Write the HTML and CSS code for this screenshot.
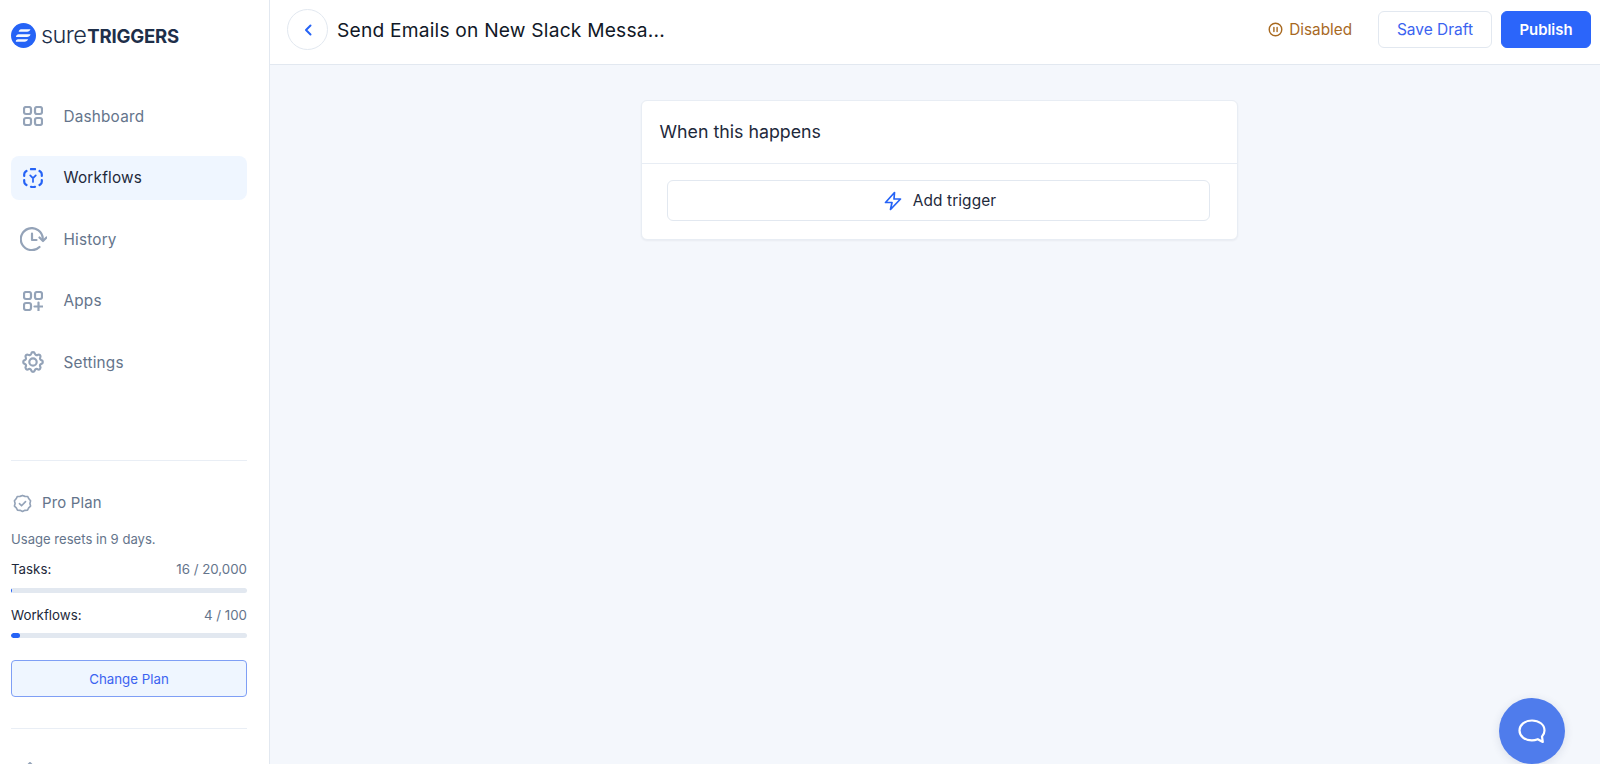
FILE: index.html
```html
<!DOCTYPE html>
<html lang="en">
<head>
<meta charset="utf-8">
<title>SureTriggers</title>
<link rel="stylesheet" href="styles.css">
</head>
<body>
<div class="app">
  <aside class="sidebar">
    <div class="logo">
      <svg class="logo-mark" viewBox="0 0 25 25"><circle cx="12.500" cy="12.500" r="12.500" fill="#2563f6"/><path d="M8.500 6.200c.4-.5.9-.7 1.500-.7h9.500c-.6 1.500-1.700 2.400-3.400 2.400H7.800c-.300 0 .2-1.200.7-1.700zM5.800 11.300c.5-.6 1.100-.8 1.800-.8h11.900c-.4 1.700-1.600 2.600-3.500 2.600H5c-.2 0 .3-1.200.8-1.800zM5.300 16.300c.5-.6 1.100-.8 1.800-.8h10c-.6 1.500-1.800 2.400-3.500 2.400H5c-.3 0-.2-1.100.3-1.600z" fill="#fff" opacity=".95" transform="translate(0 .8)"/></svg>
      <span class="logo-text"><span class="logo-light">sure</span><span class="logo-bold">TRIGGERS</span></span>
    </div>
    <nav class="nav">
      <a class="nav-item">
        <svg class="nav-icon" viewBox="0 0 20 20" fill="none" stroke="#94a3b8" stroke-width="2.200"><rect x="1" y="1" width="7" height="7" rx="2"/><rect x="12" y="1" width="7" height="7" rx="2"/><rect x="1" y="12" width="7" height="7" rx="2"/><rect x="12" y="12" width="7" height="7" rx="2"/></svg>
        <span>Dashboard</span>
      </a>
      <a class="nav-item active">
        <svg class="nav-icon" viewBox="0 0 20 20" fill="none" stroke="#2563f6" stroke-width="2.200" stroke-linecap="round"><path d="M1.200 8V6.500C1.200 5.500 1.500 4.500 2.300 3.800L3.500 3M8 1.200l2-.4 2 .4M16.500 3l1.200.8c.8.700 1.100 1.700 1.100 2.700V8M1.200 12v1.500c0 1 .3 2 1.100 2.700l1.200.8M18.800 12v1.500c0 1-.3 2-1.100 2.700l-1.200.8M8 18.800l2 .6 2-.6"/><path d="M7.200 7.300l2.800 2.900 2.800-2.900M10 10.200v3.800" stroke-width="1.700"/></svg>
        <span>Workflows</span>
      </a>
      <a class="nav-item">
        <svg class="nav-icon wide" viewBox="0 0 27 24" fill="none" stroke="#94a3b8" stroke-width="2.200" stroke-linecap="round" stroke-linejoin="round"><path d="M22.800 11.500A11 11 0 1 0 19.500 20"/><path d="M12 6.500v6.500h4.500"/><path d="M19.500 10.500l3.500 3.500 3.500-3.500"/></svg>
        <span>History</span>
      </a>
      <a class="nav-item">
        <svg class="nav-icon" viewBox="0 0 20 20" fill="none" stroke="#94a3b8" stroke-width="2.200" stroke-linecap="round"><rect x="1" y="1" width="7" height="7" rx="2"/><rect x="12" y="1" width="7" height="7" rx="2"/><rect x="1" y="12" width="7" height="7" rx="2"/><path d="M15.500 11.500v8M11.500 15.500h8"/></svg>
        <span>Apps</span>
      </a>
      <a class="nav-item">
        <svg class="nav-icon gear" viewBox="0 0 24 24" fill="none" stroke="#94a3b8" stroke-width="2" stroke-linecap="round" stroke-linejoin="round"><path d="M10.300 4.300c.4-1.800 3-1.800 3.400 0a1.700 1.700 0 0 0 2.600 1.100c1.500-.9 3.300.8 2.400 2.400a1.700 1.700 0 0 0 1 2.500c1.800.4 1.800 3 0 3.400a1.700 1.700 0 0 0-1 2.600c.9 1.500-.9 3.300-2.400 2.400a1.700 1.700 0 0 0-2.600 1c-.4 1.800-3 1.800-3.400 0a1.700 1.700 0 0 0-2.600-1c-1.500.9-3.300-.9-2.400-2.400a1.700 1.700 0 0 0-1-2.600c-1.800-.4-1.800-3 0-3.400a1.700 1.700 0 0 0 1-2.500c-.9-1.600.9-3.300 2.400-2.400 1 .6 2.300.1 2.600-1.100z"/><circle cx="12" cy="12" r="3.400"/></svg>
        <span>Settings</span>
      </a>
    </nav>
    <hr class="divider first">
    <section class="plan">
      <div class="plan-title">
        <svg class="plan-icon" viewBox="0 0 20 20" fill="none" stroke="#94a3b8" stroke-width="1.700" stroke-linecap="round" stroke-linejoin="round"><path d="M10 1.500l2.600 1 2.800.1 1.300 2.500 1.800 2.100-.7 2.800.7 2.700-2 1.900-1.200 2.400-2.800.2-2.500 1.200-2.500-1.200-2.800-.2-1.200-2.400-2-1.900.7-2.700-.7-2.800 1.800-2.100 1.300-2.500 2.800-.1z"/><path d="M6.800 10.200l2.200 2.200 4.200-4.400"/></svg>
        <span>Pro Plan</span>
      </div>
      <p class="plan-note">Usage resets in 9 days.</p>
      <div class="usage-row tasks"><span>Tasks:</span><span class="usage-count">16 / 20,000</span></div>
      <div class="bar"><div class="bar-fill" style="width:1px"></div></div>
      <div class="usage-row flows"><span>Workflows:</span><span class="usage-count">4 / 100</span></div>
      <div class="bar"><div class="bar-fill" style="width:4%"></div></div>
      <button class="change-plan">Change Plan</button>
    </section>
    <hr class="divider last">
    <svg class="foot-icon" viewBox="0 0 20 20" fill="none" stroke="#94a3b8" stroke-width="2" stroke-linejoin="round"><path d="M10 1l7 7-7 7-7-7z"/></svg>
  </aside>
  <div class="main">
    <header class="topbar">
      <button class="back" aria-label="Back">
        <svg viewBox="0 0 10 14" fill="none" stroke="#2563f6" stroke-width="2" stroke-linecap="round" stroke-linejoin="round"><path d="M7.500 2.500L3 7l4.500 4.500"/></svg>
      </button>
      <h1 class="title">Send Emails on New Slack Messa...</h1>
      <div class="status">
        <svg viewBox="0 0 16 16" fill="none" stroke="#a8691f" stroke-width="1.500" stroke-linecap="round"><circle cx="8" cy="8" r="6.700"/><path d="M6.300 5.800v4.400M9.700 5.800v4.400"/></svg>
        <span>Disabled</span>
      </div>
      <button class="btn draft">Save Draft</button>
      <button class="btn publish">Publish</button>
    </header>
    <main class="canvas">
      <section class="card">
        <h2 class="card-title">When this happens</h2>
        <div class="card-body">
          <button class="add-trigger">
            <svg viewBox="0 0 20 20" fill="none" stroke="#2563f6" stroke-width="1.700" stroke-linejoin="round"><path d="M11.500 1.500L2.500 11.500H9L7.500 18.500 17.500 8H11z"/></svg>
            <span>Add trigger</span>
          </button>
        </div>
      </section>
    </main>
  </div>
  <button class="chat" aria-label="Open chat">
    <svg viewBox="0 0 28 25" fill="none" stroke="#fff" stroke-width="2.200" stroke-linejoin="round"><path d="M14 1.500c7 0 12.500 4 12.500 10 0 2.500-1 4.500-2.500 6l.8 5.500-5-2.800c-1.800.7-3.700 1.200-5.800 1.200C6.800 21.500 1.500 17 1.500 11.500S6.800 1.500 14 1.500z"/></svg>
  </button>
</div>
</body>
</html>
```
FILE: styles.css
```css
* { box-sizing: border-box; }
html, body { margin: 0; height: 100%; overflow: hidden; }
body { font-family: Inter, "Liberation Sans", sans-serif; background: #f4f7fc; color: #1e293b; }
button { font-family: inherit; cursor: pointer; }

.app { display: flex; height: 764px; overflow: hidden; }

.sidebar { flex: 0 0 270px; height: 764px; overflow: hidden; background: #fff; border-right: 1px solid #e2e8f0; padding: 23px 22px 0 11px; }

.logo { display: flex; align-items: center; gap: 5px; height: 25px; }
.logo-mark { width: 25px; height: 25px; flex: none; }
.logo-text { color: #1e2f4a; white-space: nowrap; line-height: 25px; }
.logo-light { font-size: 23.500px; font-weight: 300; letter-spacing: -.6px; }
.logo-bold { font-size: 18.600px; font-weight: 700; letter-spacing: -.2px; margin-left: 1px; }

.nav { display: flex; flex-direction: column; gap: 17.500px; margin-top: 46px; }
.nav-item { display: flex; align-items: center; height: 44px; border-radius: 8px; padding-left: 12px; font-size: 15.300px; letter-spacing: .2px; color: #64748b; font-weight: 400; }
.nav-item span { margin-left: 20.500px; }
.nav-item.active { background: #eff6ff; color: #1e293b; }
.nav-icon { width: 20px; height: 20px; flex: none; }
.nav-icon.wide { width: 27px; height: 24px; margin-left: -3px; margin-right: -4px; }
.nav-icon.gear { width: 26px; height: 26px; margin: 0 -3px; }

.divider { border: 0; height: 1px; background: #e9eef5; margin: 0; }
.divider.first { margin-top: 76px; }
.divider.last { margin-top: 31px; }
.foot-icon { display: block; width: 20px; height: 20px; margin: 33px 0 0 9px; }

.plan { padding-top: 32px; }
.plan-title { display: flex; align-items: center; gap: 11px; height: 20px; padding-left: 2px; font-size: 14.900px; letter-spacing: .2px; color: #64748b; font-weight: 400; }
.plan-icon { width: 19px; height: 19px; flex: none; margin-right: -1px; }
.plan-note { margin: 16px 0 0; font-size: 13.100px; line-height: 20px; color: #64748b; }
.usage-row { display: flex; justify-content: space-between; font-size: 13.300px; line-height: 20px; color: #1e293b; }
.usage-row.tasks { margin-top: 10px; }
.usage-row.flows { margin-top: 12px; }
.usage-count { color: #64748b; }
.bar { height: 5px; margin-top: 9px; background: #e2e8f0; border-radius: 3px; overflow: hidden; }
.usage-row.flows + .bar { margin-top: 8px; }
.bar-fill { height: 100%; background: #2563f6; border-radius: 3px; }
.change-plan { display: block; width: 100%; height: 37px; margin-top: 22px; border: 1px solid #7f9ff5; border-radius: 4px; background: #eff6ff; color: #3b63f0; font-size: 13.300px; font-weight: 400; }

.main { flex: 1; display: flex; flex-direction: column; min-width: 0; }
.topbar { display: flex; align-items: center; height: 65px; background: #fff; border-bottom: 1px solid #e2e8f0; padding: 0 9px 5px 17px; flex: none; }
.back { width: 41px; height: 41px; border-radius: 50%; border: 1px solid #e2e8f0; background: #fff; padding: 0; display: flex; align-items: center; justify-content: center; }
.back svg { width: 10px; height: 14px; }
.title { margin: 0 auto 0 9px; font-size: 19.200px; font-weight: 400; color: #111827; letter-spacing: .2px; }
.status { display: flex; align-items: center; gap: 6px; margin-right: 26px; font-size: 15.300px; color: #a8691f; }
.status svg { width: 15px; height: 15px; }
.btn { height: 37px; border-radius: 6px; font-size: 15.500px; font-weight: 400; padding: 0; }
.btn.draft { width: 114px; border: 1px solid #e2e8f0; background: #fff; color: #3b63f0; }
.btn.publish { width: 90px; margin-left: 9px; border: 1px solid #2b65fa; background: #2b65fa; color: #fff; font-size: 14.900px; font-weight: 600; }

.canvas { flex: 1; display: flex; justify-content: center; align-items: flex-start; padding: 35px 92px 0 100px; }
.card { width: 597px; background: #fff; border: 1px solid #e8edf4; border-radius: 6px; box-shadow: 0 1px 2px rgba(15,23,42,.05); }
.card-title { margin: 0; height: 63px; line-height: 62px; padding-left: 18px; font-size: 17.800px; font-weight: 400; color: #1e293b; border-bottom: 1px solid #e8edf4; }
.card-body { padding: 16px 27px 18px 25px; }
.add-trigger { display: flex; align-items: center; justify-content: center; gap: 10px; width: 100%; height: 41px; background: #fff; border: 1px solid #e2e8f0; border-radius: 6px; font-size: 15.400px; letter-spacing: .1px; font-weight: 400; color: #1e293b; padding: 0 0 0 3px; }
.add-trigger svg { width: 20px; height: 20px; }

.chat { position: absolute; left: 1499px; top: 698px; width: 66px; height: 66px; border-radius: 50%; border: 0; background: #4f7cec; box-shadow: 0 2px 10px rgba(30,50,100,.12); padding: 0; display: flex; align-items: center; justify-content: center; }
.chat svg { width: 28px; height: 25px; }
```
